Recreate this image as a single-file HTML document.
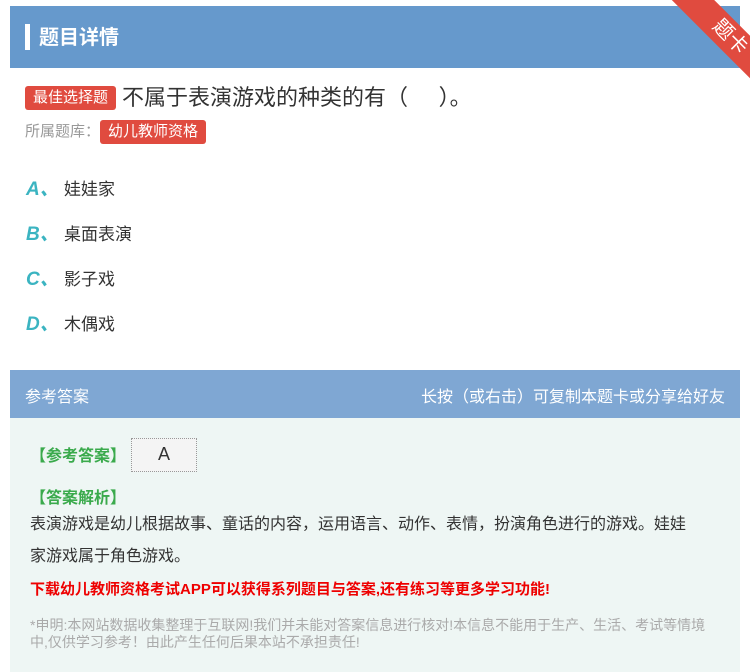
<!DOCTYPE html>
<html><head><meta charset="utf-8"><style>
body{margin:0;width:750px;height:672px;background:#fff;font-family:"Liberation Sans","Noto Sans CJK SC",sans-serif;position:relative;overflow:hidden}
.hd{position:absolute;left:10px;top:6px;width:730px;height:62px;background:#6699cc}
.hd .bar{position:absolute;left:15px;top:18px;width:5px;height:26px;background:#fff}
.hd .t{position:absolute;left:29px;top:15px;color:#fff;font-size:20px;font-weight:bold}
.rib{position:absolute;left:655px;top:22px;width:150px;height:30px;background:#e04b3f;transform:rotate(45deg);color:#fff;font-size:20px;text-align:center;line-height:30px;transform-origin:center}
.tag{display:inline-block;background:#e04b3f;color:#fff;border-radius:3px;font-size:15px;padding:0 8px;height:24px;line-height:24px}
.q{position:absolute;left:25px;top:80px;font-size:22px;color:#333}
.lib{position:absolute;left:25px;top:120px;font-size:15px;color:#999}
.opt{position:absolute;left:26px;font-size:17px;color:#333}
.opt b{color:#3bb4c1;font-style:italic;font-size:19px;display:inline-block;width:38px}
.ah{position:absolute;left:10px;top:370px;width:730px;height:48px;background:#7fa7d3;color:#fff;font-size:16px}
.ab{position:absolute;left:10px;top:418px;width:730px;height:254px;background:#eef6f4}
.g{color:#3aaa4c;font-weight:bold;font-size:16px;position:absolute;left:30px}
</style></head><body>
<div class="hd"><div class="bar"></div><div class="t">题目详情</div></div>
<div class="rib">题卡</div>
<div class="q"><span class="tag" style="vertical-align:3px;margin-right:6px">最佳选择题</span>不属于表演游戏的种类的有（&nbsp;&nbsp;&nbsp;&nbsp;&nbsp;）。</div>
<div class="lib">所属题库：<span class="tag">幼儿教师资格</span></div>
<div class="opt" style="top:174px"><b>A、</b>娃娃家</div>
<div class="opt" style="top:219px"><b>B、</b>桌面表演</div>
<div class="opt" style="top:264px"><b>C、</b>影子戏</div>
<div class="opt" style="top:309px"><b>D、</b>木偶戏</div>
<div class="ah"><span style="position:absolute;left:15px;top:13px">参考答案</span><span style="position:absolute;right:15px;top:13px">长按（或右击）可复制本题卡或分享给好友</span></div>
<div class="ab"></div>
<div class="g" style="top:442px">【参考答案】</div>
<div style="position:absolute;left:131px;top:438px;width:64px;height:32px;background:#f4f4f4;border:1px dotted #999;font-size:18px;text-align:center;line-height:30px;color:#333">A</div>
<div class="g" style="top:484px">【答案解析】</div>
<div style="position:absolute;left:30px;top:509px;width:665px;font-size:16px;color:#333;line-height:32px">表演游戏是幼儿根据故事、童话的内容，运用语言、动作、表情，扮演角色进行的游戏。娃娃家游戏属于角色游戏。</div>
<div style="position:absolute;left:30px;top:578px;font-size:15px;color:#e00;font-weight:bold">下载幼儿教师资格考试APP可以获得系列题目与答案,还有练习等更多学习功能!</div>
<div style="position:absolute;left:30px;top:617px;width:690px;font-size:14px;color:#aaa;line-height:17px">*申明:本网站数据收集整理于互联网!我们并未能对答案信息进行核对!本信息不能用于生产、生活、考试等情境中,仅供学习参考！由此产生任何后果本站不承担责任!</div>
</body></html>
